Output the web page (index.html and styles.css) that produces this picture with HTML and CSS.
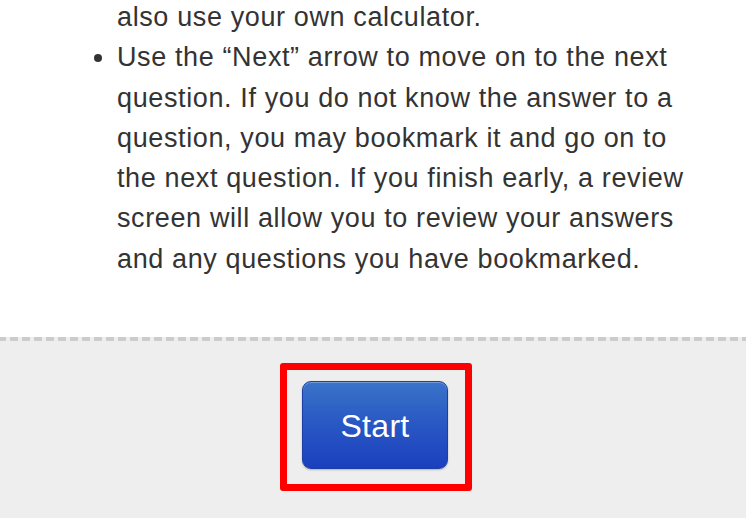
FILE: index.html
```html
<!DOCTYPE html>
<html lang="en">
<head>
<meta charset="utf-8">
<title>Instructions</title>
<link rel="stylesheet" href="styles.css">
</head>
<body>
  <section class="instructions">
    <ul class="rules">
      <li class="rule rule-tail">also use your own calculator.</li>
      <li class="rule">Use the “Next” arrow to move on to the next question. If you do not know the answer to a question, you may bookmark it and go on to the next question. If you finish early, a review screen will allow you to review your answers and any questions you have bookmarked.</li>
    </ul>
  </section>
  <footer class="actions">
    <div class="highlight">
      <button class="start-btn" type="button">Start</button>
    </div>
  </footer>
</body>
</html>
```
FILE: styles.css
```css
html, body {
  margin: 0;
  padding: 0;
}

body {
  width: 746px;
  height: 518px;
  overflow: hidden;
  font-family: "Liberation Sans", Arial, Helvetica, sans-serif;
  color: #333;
  background: #eee;
  display: flex;
  flex-direction: column;
}

.instructions {
  background: #fff;
  padding: 0 50px 58px 0;
}

.rules {
  margin: -3px 0 0 0;
  padding-left: 117px;
  font-size: 27px;
  letter-spacing: 0.62px;
  line-height: 40.3px;
}

.rule-tail {
  list-style: none;
}

.actions {
  flex: 1;
  position: relative;
  display: flex;
  justify-content: center;
  align-items: flex-start;
  padding-top: 26px;
  padding-left: 6px;
  background: #eee;
}

/* dashed divider along the top edge of the footer */
.actions::before {
  content: "";
  position: absolute;
  left: 0;
  right: 0;
  top: 0;
  height: 4px;
  background: repeating-linear-gradient(90deg, #ccc 0 8px, transparent 8px 12px);
  background-position: -2px 0;
}

.highlight {
  border: 7px solid #f00;
  border-radius: 3px;
  padding: 11px 17px 15px 15px;
}

.start-btn {
  display: block;
  width: 146px;
  height: 88px;
  border: 1px solid #1c3ea6;
  border-radius: 9px;
  background: linear-gradient(#3a74c9 0%, #2a59c4 45%, #1b40bf 100%);
  box-shadow: inset 0 1px 0 rgba(255, 255, 255, 0.3), 0 1px 2px rgba(0, 0, 0, 0.25);
  color: #fff;
  font-family: "Liberation Sans", Arial, Helvetica, sans-serif;
  font-size: 32px;
  letter-spacing: 0.3px;
  padding: 2px 0 0 0;
  cursor: pointer;
}
```
